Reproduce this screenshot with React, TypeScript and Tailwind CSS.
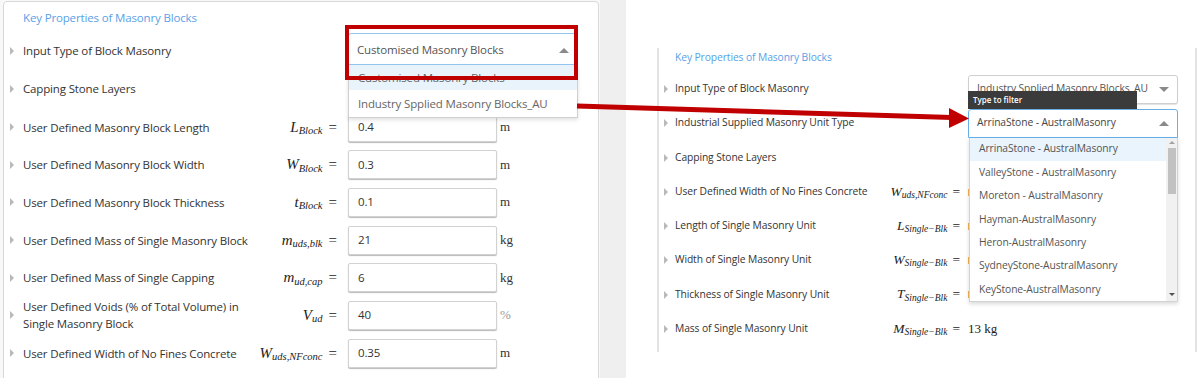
import React from "react";

const sans = "font-['Open_Sans','Noto_Sans',sans-serif]";
const serif = "font-['Liberation_Serif','DejaVu_Serif',serif]";

function Tri() {
  return <span className="block w-0 h-0 border-y-[4px] border-y-transparent border-l-[4px] border-l-[#b9b9b9]" />;
}

function Caret({ up }: { up?: boolean }) {
  return up ? (
    <span className="block w-0 h-0 border-x-[5px] border-x-transparent border-b-[5px] border-b-[#8a8a8a]" />
  ) : (
    <span className="block w-0 h-0 border-x-[5px] border-x-transparent border-t-[5px] border-t-[#8a8a8a]" />
  );
}

function Math({ v, sub, big }: { v: string; sub: string; big?: boolean }) {
  return (
    <span className={`${serif} whitespace-nowrap text-[#222] ${big ? "text-[15px]" : "text-[13.5px]"}`}>
      <span className="italic">{v}</span>
      <sub className={`italic ${big ? "text-[10.5px]" : "text-[9.5px]"}`}>{sub}</sub>
      <span className={big ? "ml-[6px]" : "ml-[5px]"}>=</span>
    </span>
  );
}

type LRow = { label: React.ReactNode; v?: string; sub?: string; val?: string; unit?: string; h: string; unitGray?: boolean };

const leftRows: LRow[] = [
  { label: "User Defined Masonry Block Length", v: "L", sub: "Block", val: "0.4", unit: "m", h: "h-[38px]" },
  { label: "User Defined Masonry Block Width", v: "W", sub: "Block", val: "0.3", unit: "m", h: "h-[37px]" },
  { label: "User Defined Masonry Block Thickness", v: "t", sub: "Block", val: "0.1", unit: "m", h: "h-[38px]" },
  { label: "User Defined Mass of Single Masonry Block", v: "m", sub: "uds,blk", val: "21", unit: "kg", h: "h-[38px]" },
  { label: "User Defined Mass of Single Capping", v: "m", sub: "ud,cap", val: "6", unit: "kg", h: "h-[37px]" },
  {
    label: (
      <>
        User Defined Voids (% of Total Volume) in
        <br />
        Single Masonry Block
      </>
    ),
    v: "V",
    sub: "ud",
    val: "40",
    unit: "%",
    h: "h-[38px]",
    unitGray: true,
  },
  { label: "User Defined Width of No Fines Concrete", v: "W", sub: "uds,NFconc", val: "0.35", unit: "m", h: "h-[38px]" },
];

const rightRows = [
  { label: "User Defined Width of No Fines Concrete", v: "W", sub: "uds,NFconc", h: "h-[34px]", input: true },
  { label: "Length of Single Masonry Unit", v: "L", sub: "Single\u2212Blk", h: "h-[34px]", input: true },
  { label: "Width of Single Masonry Unit", v: "W", sub: "Single\u2212Blk", h: "h-[34px]", input: true },
  { label: "Thickness of Single Masonry Unit", v: "T", sub: "Single\u2212Blk", h: "h-[35px]", input: true },
  { label: "Mass of Single Masonry Unit", v: "M", sub: "Single\u2212Blk", h: "h-[34px]", input: false },
];

const options = [
  "ArrinaStone - AustralMasonry",
  "ValleyStone - AustralMasonry",
  "Moreton - AustralMasonry",
  "Hayman-AustralMasonry",
  "Heron-AustralMasonry",
  "SydneyStone-AustralMasonry",
  "KeyStone-AustralMasonry",
];

const L = "text-[11.5px] tracking-[-0.15px]";
const R = "text-[10.3px] tracking-[-0.1px]";

export default function App() {
  return (
    <div className={`relative flex w-[1199px] h-[378px] overflow-hidden bg-white ${sans}`}>
      {/* Left screenshot */}
      <div className="w-[600px] h-full bg-[#f8f8f8] pl-[3px] pt-[1px]">
        <div className="w-[596px] h-[400px] bg-white border border-[#d8d8d8] rounded-[4px]">
          <div className={`h-[30px] pt-[2px] pl-[19px] flex items-center ${L} text-[#5aa1e6]`}>
            Key Properties of Masonry Blocks
          </div>
          {/* Row 1: select */}
          <div className="flex h-[38px] items-center">
            <div className="w-[19px] pl-[6px]"><Tri /></div>
            <div className={`w-[235px] ${L} text-[#333]`}>Input Type of Block Masonry</div>
            <div className="w-[79px]" />
            <div className="relative ml-[11px] w-[230px] h-[32px] self-start mt-[1px] z-10">
              <div className={`h-full border border-[#93c6ef] rounded-t-[3px] bg-white flex items-center pl-[8px] pr-[8px] pt-[2px] ${L} text-[#555]`}>
                <span className="flex-1">Customised Masonry Blocks</span>
                <Caret up />
              </div>
              <div className={`absolute top-full left-0 w-[230px] bg-white border border-[#d0d0d0] border-t-0 shadow-[0_2px_4px_rgba(0,0,0,0.12)] ${L} text-[#666]`}>
                <div className="h-[25px] bg-[#e9f3fb] pl-[9px] flex items-center">Customised Masonry Blocks</div>
                <div className="h-[27px] pl-[9px] flex items-center">Industry Spplied Masonry Blocks_AU</div>
              </div>
            </div>
          </div>
          {/* Row 2 */}
          <div className="flex h-[38px] items-center">
            <div className="w-[19px] pl-[6px]"><Tri /></div>
            <div className={`w-[235px] ${L} text-[#333]`}>Capping Stone Layers</div>
          </div>
          {leftRows.map((r, i) => (
            <div key={i} className={`flex ${r.h} items-center`}>
              <div className="w-[19px] pl-[6px]"><Tri /></div>
              <div className={`w-[235px] ${L} leading-[17px] text-[#333]`}>{r.label}</div>
              <div className="w-[79px] flex justify-end">
                <Math v={r.v!} sub={r.sub!} big />
              </div>
              <div className={`ml-[11px] w-[149px] h-[29px] border border-[#d2d2d2] rounded-[2px] shadow-[0_1px_1px_rgba(0,0,0,0.28)] bg-white flex items-center pl-[9px] ${L} text-[#333]`}>
                {r.val}
              </div>
              <div className={`ml-[3px] ${serif} text-[13px] ${r.unitGray ? "text-[#999]" : "text-[#333]"}`}>{r.unit}</div>
            </div>
          ))}
        </div>
      </div>

      {/* gray band */}
      <div className="w-[26px] h-full bg-[#efefef]" />

      {/* Right screenshot */}
      <div className="flex-1 h-full bg-white pl-[31px] pt-[48px]">
        <div className="w-[540px] h-[304px] border-l-2 border-r-2 border-[#e2e2e2]">
          <div className={`h-[24px] pb-[4px] pl-[16px] flex items-center ${R} text-[#5aa1e6]`}>
            Key Properties of Masonry Blocks
          </div>
          {/* select 1 */}
          <div className="flex h-[34px] items-center">
            <div className="w-[16px] pl-[5px]"><Tri /></div>
            <div className={`w-[213px] ${R} text-[#333]`}>Input Type of Block Masonry</div>
            <div className="w-[72px]" />
            <div className={`ml-[8px] w-[210px] h-[29px] border border-[#cfcfcf] rounded-[3px] bg-white flex items-center pl-[8px] pr-[8px] ${R} text-[#555] shadow-[0_1px_1px_rgba(0,0,0,0.12)]`}>
              <span className="flex-1 whitespace-nowrap">Industry Spplied Masonry Blocks_AU</span>
              <Caret />
            </div>
          </div>
          {/* select 2 */}
          <div className="flex h-[34px] items-center">
            <div className="w-[16px] pl-[5px]"><Tri /></div>
            <div className={`w-[213px] ${R} text-[#333]`}>Industrial Supplied Masonry Unit Type</div>
            <div className="w-[72px]" />
            <div className="relative ml-[8px] w-[210px] h-[29px] z-20">
              <div className="absolute left-0 bottom-full w-[169px] h-[18px] bg-[#3b3b3b] text-white text-[8px] font-semibold pl-[5px] flex items-center">
                Type to filter
              </div>
              <div className={`h-full border border-[#66afe9] rounded-t-[3px] bg-white flex items-center pl-[8px] pr-[8px] ${R} text-[#444]`}>
                <span className="flex-1">ArrinaStone - AustralMasonry</span>
                <Caret up />
              </div>
              <div className={`absolute top-full left-[1px] w-[209px] h-[164px] bg-white border border-[#d3d3d3] border-t-0 shadow-[0_2px_4px_rgba(0,0,0,0.15)] ${R} text-[#555]`}>
                {options.map((o, i) => (
                  <div key={o} className={`h-[23.4px] pl-[9px] flex items-center ${i === 0 ? "bg-[#eaf4fc] mr-[11px]" : ""}`}>
                    {o}
                  </div>
                ))}
                <div className="absolute right-0 top-0 bottom-0 w-[11px] bg-[#f1f1f1] flex flex-col items-center">
                  <span className="mt-[3px] block w-0 h-0 border-x-[3px] border-x-transparent border-b-[3px] border-b-[#a3a3a3]" />
                  <span className="mt-[4px] block w-[8px] h-[46px] bg-[#c1c1c1]" />
                  <span className="mt-auto mb-[5px] block w-0 h-0 border-x-[3px] border-x-transparent border-t-[3px] border-t-[#505050]" />
                </div>
              </div>
            </div>
          </div>
          {/* capping */}
          <div className="flex h-[35px] items-center">
            <div className="w-[16px] pl-[5px]"><Tri /></div>
            <div className={`w-[213px] ${R} text-[#333]`}>Capping Stone Layers</div>
          </div>
          {rightRows.map((r, i) => (
            <div key={i} className={`flex ${r.h} items-center`}>
              <div className="w-[16px] pl-[5px]"><Tri /></div>
              <div className={`w-[213px] ${R} text-[#333] whitespace-nowrap`}>{r.label}</div>
              <div className="w-[72px] flex justify-end">
                <Math v={r.v} sub={r.sub} />
              </div>
              {r.input ? (
                <div className="ml-[8px] w-[100px] h-[7px] border-l-2 border-[#f0b45a]" />
              ) : (
                <div className={`ml-[8px] ${serif} text-[13px] text-[#222]`}>13 kg</div>
              )}
            </div>
          ))}
        </div>
      </div>

      {/* Annotations */}
      <div className="absolute left-[345px] top-[25px] w-[233px] h-[55px] border-4 border-[#c00000] z-30" />
      <svg className="absolute left-0 top-0 z-40" width="1199" height="378" viewBox="0 0 1199 378">
        <line x1="577" y1="106" x2="952" y2="117.5" stroke="#c00000" strokeWidth="5" />
        <polygon points="949,108 969,118.5 949,128" fill="#c00000" />
      </svg>
    </div>
  );
}
